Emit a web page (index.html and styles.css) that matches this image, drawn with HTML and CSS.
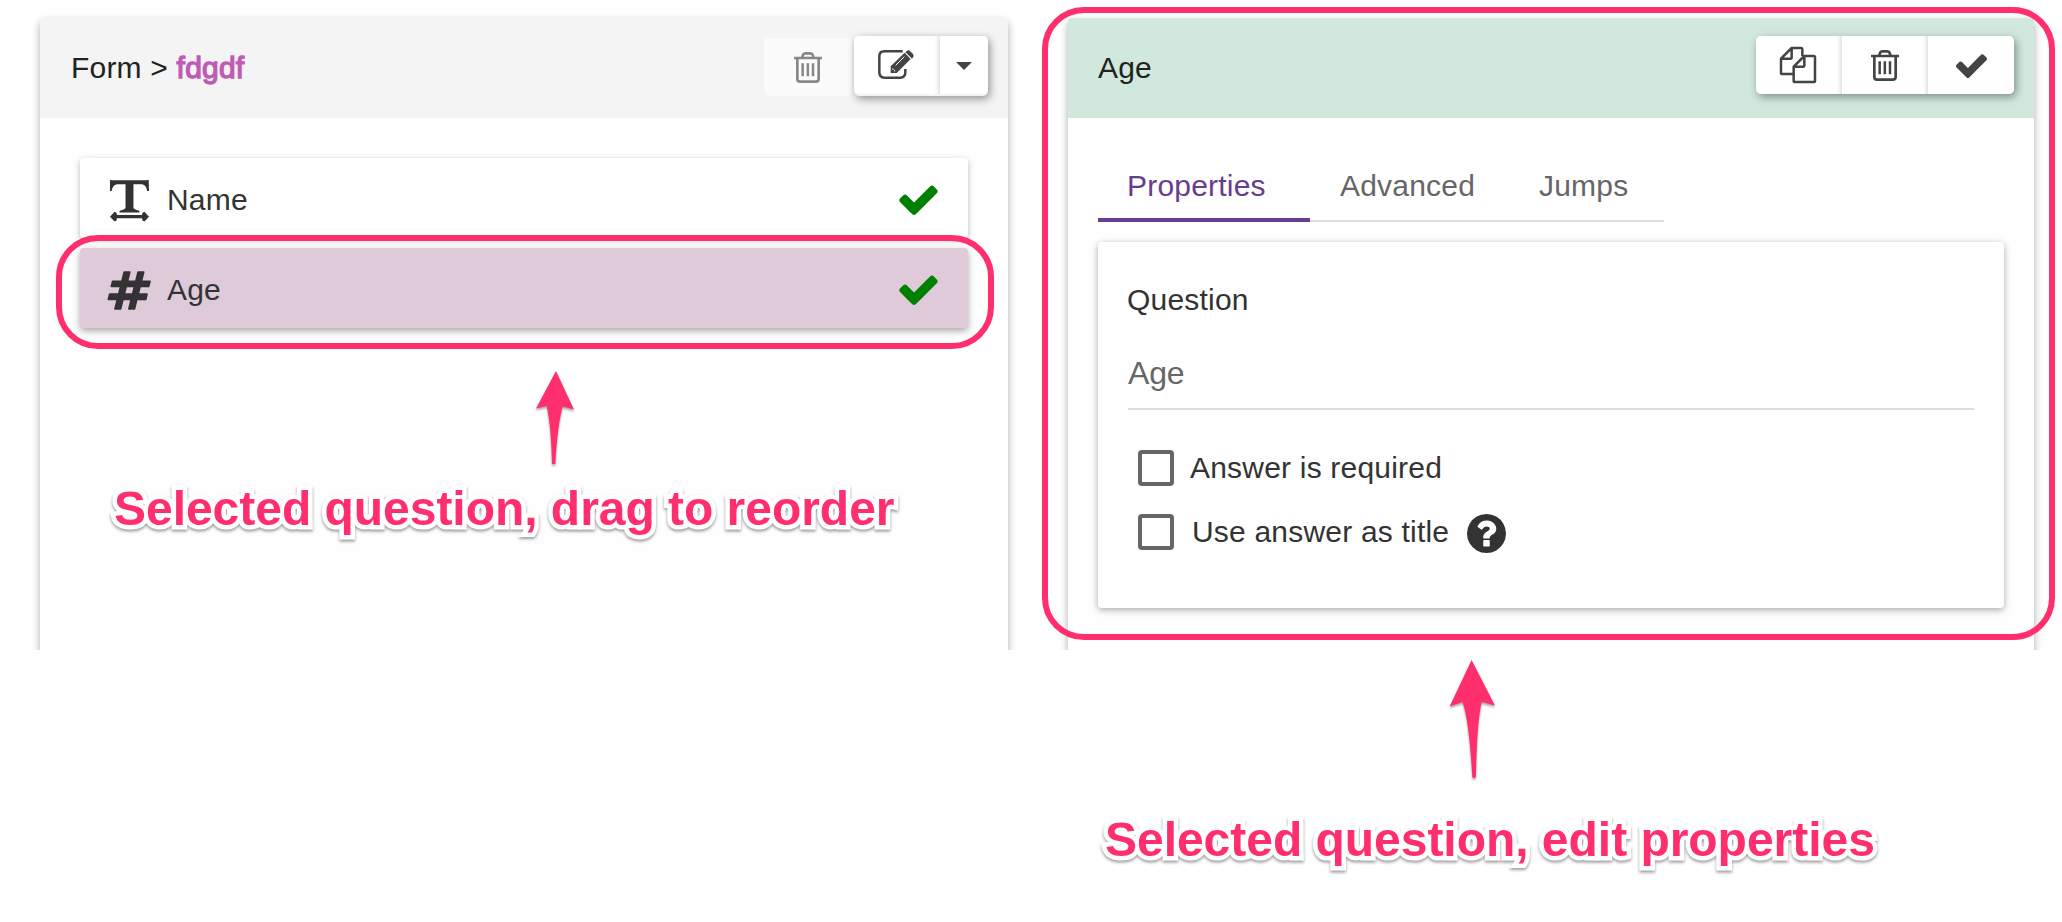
FILE: index.html
```html
<!DOCTYPE html>
<html lang="en">
<head>
<meta charset="utf-8">
<title>Form editor</title>
<link rel="stylesheet" href="styles.css">
</head>
<body>
<svg class="sprite" aria-hidden="true">
  <symbol id="check" viewBox="121 270 1550 1252"><path d="M1671 566q0 40-28 68l-724 724-136 136q-28 28-68 28t-68-28l-136-136-362-362q-28-28-28-68t28-68l136-136q28-28 68-28t68 28l294 295 656-657q28-28 68-28t68 28l136 136q28 28 28 68z"/></symbol>
  <symbol id="trash" viewBox="0 0 84 93"><path d="M10 19V80Q10 89 18 89H65Q74 89 74 80V19M0 18H84M24 17L28 7Q30 4 34 4H49Q53 4 55 7L59 17" fill="none" stroke="currentColor" stroke-width="8"/><path d="M26 34V73M41.500 34V73M57 34V73" fill="none" stroke="currentColor" stroke-width="7.500"/></symbol>
</svg>
<main class="workspace">
  <section class="panel">
    <header class="panel-head">
      <h1 class="title">Form &gt; <span class="form-name">fdgdf</span></h1>
      <div class="tools">
        <button class="btn disabled"><svg class="i-trash"><use href="#trash"/></svg></button>
        <div class="group">
          <button class="btn"><svg class="i-edit" viewBox="0 0 108 87"><path d="M74 4H19Q4 4 4 19V67Q4 83 19 83H67Q82 83 82 67V57" class="line"/><path d="M38 49L80 8L98 27L56 69H38Z"/><path d="M84 5Q90-2 96 3L105 12Q110 18 104 24L101 26L82 8Z"/><path d="M53 46L79 20M82 8L100 26" stroke="#fff" stroke-width="3"/><path d="M43 54L53 64H48V59H43Z" fill="#fff"/></svg></button>
          <button class="btn narrow"><svg class="i-caret" viewBox="0 0 16 8"><path d="M0 0H16L8 8Z"/></svg></button>
        </div>
      </div>
    </header>
    <ul class="questions">
      <li class="question">
        <svg class="q-icon" viewBox="84 59 130 130"><path d="M90 61L96 63H201L207 61L208 95H202Q200 77 187 75H161V146Q161 151 179 155V160H119V155Q137 151 137 146V75H111Q98 77 95 95H90Z"/><path d="M90 173L103 159Q111 158 111 168H187Q187 158 195 159L208 173L195 187Q187 188 187 178H111Q111 188 103 187Z"/></svg>
        <span class="q-name">Name</span><svg class="q-ok"><use href="#check"/></svg>
      </li>
      <li class="question selected">
        <svg class="q-icon" viewBox="84 325 130 130"><path d="M133 334H150L122 446H105ZM175 334H192L164 446H147ZM98 362H211L207 378H94ZM89 401H202L198 417H85Z" stroke="currentColor" stroke-width="5" stroke-linejoin="round"/></svg>
        <span class="q-name">Age</span><svg class="q-ok"><use href="#check"/></svg>
      </li>
    </ul>
  </section>
  <section class="panel detail">
    <header class="panel-head green">
      <h2 class="title">Age</h2>
      <div class="group">
        <button class="btn"><svg class="i-copy" viewBox="0 0 108 108"><path class="line" d="M39 81H7Q3 81 3 77V35L35 3H63Q67 3 67 7V27M35 3V31Q35 35 31 35H3"/><path class="line" d="M45 105Q41 105 41 101V59L73 27H101Q105 27 105 31V101Q105 105 101 105ZM73 27V55Q73 59 69 59H41"/></svg></button>
        <button class="btn"><svg class="i-trash"><use href="#trash"/></svg></button>
        <button class="btn"><svg class="i-check"><use href="#check"/></svg></button>
      </div>
    </header>
    <div class="detail-body">
      <nav class="tabs">
        <a class="tab active">Properties</a><a class="tab advanced">Advanced</a><a class="tab jumps">Jumps</a>
      </nav>
      <div class="card">
        <div class="label">Question</div>
        <div class="field">Age</div>
        <div class="option"><span class="box"></span><span class="required">Answer is required</span></div>
        <div class="option"><span class="box"></span><span class="use-title">Use answer as title</span>
          <svg class="help" viewBox="128 128 1536 1536"><path d="M1024 1376v-192q0-14-9-23t-23-9h-192q-14 0-23 9t-9 23v192q0 14 9 23t23 9h192q14 0 23-9t9-23zm256-672q0-88-55.500-163t-138.500-116-170-41q-243 0-371 213-15 24 8 42l132 100q7 6 19 6 16 0 25-12 53-68 86-92 34-24 86-24 48 0 85.500 26t37.500 59q0 38-20 61t-68 45q-63 28-115.500 86.500t-52.500 125.500v36q0 14 9 23t23 9h192q14 0 23-9t9-23q0-19 21.500-49.500t54.500-49.500q32-18 49-28.500t46-35 44.500-48 28-60.500 12.500-81zm384 192q0 209-103 385.500t-279.500 279.500-385.500 103-385.500-103-279.500-279.500-103-385.500 103-385.500 279.500-279.500 385.500-103 385.500 103 279.500 279.500 103 385.500z"/></svg>
        </div>
      </div>
    </div>
  </section>
</main>
<div class="ring ring-question"></div>
<div class="ring ring-detail"></div>
<svg class="arrow arrow-left" viewBox="536 371 38 93"><path d="M556 371L574 409.500L562.700 406.500Q557.500 425 555.300 464H552Q551 425 546.700 406L536 408.500Z"/></svg>
<svg class="arrow arrow-right" viewBox="1449 660 46 118"><path d="M1471.600 660L1495 705.500L1481.800 702Q1477 720 1475.900 777Q1474 779 1472.300 777Q1469 720 1462.500 702L1449.600 706.500Z"/></svg>
<p class="caption caption-left">Selected question, drag to reorder</p>
<p class="caption caption-right">Selected question, edit properties</p>
</body>
</html>
```
FILE: styles.css
```css
* { box-sizing: border-box; }
body {
  margin: 0;
  position: relative;
  width: 2062px;
  height: 922px;
  overflow: hidden;
  background: #fff;
  color: #333;
  font: 30px/36px "Liberation Sans", Arial, sans-serif;
  letter-spacing: 0.2px;
}
.sprite { position: absolute; width: 0; height: 0; }
svg { display: block; fill: currentColor; overflow: visible; flex: none; }
.line { fill: none; stroke: currentColor; stroke-width: 7.5; stroke-linejoin: round; }
.workspace {
  display: flex;
  gap: 60px;
  height: 650px;
  padding: 18px 28px 0 40px;
  overflow: hidden;
}
.panel {
  width: 968px;
  height: 700px;
  border-radius: 4px;
  background: #fefefe;
  box-shadow: 0 4px 8px rgba(0, 0, 0, 0.33);
}
.detail { width: 966px; }
.panel-head {
  display: flex;
  align-items: flex-start;
  justify-content: space-between;
  height: 100px;
  padding: 18px 20px 0 31px;
  border-radius: 4px 4px 0 0;
  background: #f4f4f4;
}
.green { padding-left: 30px; background: #d1e9dc; }
.title { margin: 14px 0 0; font-size: 30px; font-weight: 400; color: #222; letter-spacing: 0.2px; }
.form-name { color: #c05ab4; -webkit-text-stroke: 1.300px #c05ab4; }
.tools { display: flex; gap: 2px; }
.group { display: flex; border-radius: 5px; box-shadow: 2px 3px 8px rgba(0, 0, 0, 0.4); }
.btn {
  display: flex;
  align-items: center;
  justify-content: center;
  width: 86px;
  height: 58px;
  padding: 0;
  border: 0;
  background: #fff;
  color: #444;
}
.group .btn:first-child { border-radius: 5px 0 0 5px; }
.group .btn:last-child { border-radius: 0 5px 5px 0; }
.group .btn:not(:last-child) { box-shadow: inset -5px 0 5px -4px rgba(0, 0, 0, 0.18); }
.group .narrow { width: 48px; }
.disabled { width: 88px; margin-top: 2px; border-radius: 5px; background: #fbfbfb; color: #888; }
.i-trash { width: 28px; height: 31px; margin-right: 1px; }
.i-edit { width: 36px; height: 29px; margin: 0 2px 2px 0; }
.i-caret { width: 16px; height: 8px; margin-top: 1px; }
.i-copy { width: 36px; height: 36px; margin-right: 2px; }
.i-check { width: 31px; height: 25px; margin-top: 1px; }
.questions {
  display: flex;
  flex-direction: column;
  gap: 10px;
  margin: 0;
  padding: 40px 40px 0;
  list-style: none;
}
.question {
  display: flex;
  align-items: center;
  height: 80px;
  padding: 4px 30px 0 28px;
  border-radius: 4px;
  background: #fff;
  box-shadow: 0 2px 6px rgba(0, 0, 0, 0.28);
}
.question.selected { background: #dfcada; box-shadow: 0 3px 7px rgba(0, 0, 0, 0.34); }
.q-icon { width: 43px; height: 43px; margin-right: 16px; }
.q-name { flex: 1; }
.q-ok { width: 39px; height: 31px; margin-bottom: 1px; color: #008000; }
.detail-body { padding: 46px 30px 0; }
.tabs { display: flex; width: 566px; height: 58px; border-bottom: 2px solid #ddd; }
.tab { height: 58px; padding: 4px 0 0 30px; color: #666; }
.tab.active { width: 212px; padding-left: 29px; border-bottom: 4px solid #663d8f; color: #663d8f; }
.tab.advanced { width: 199px; }
.tab.jumps { width: 155px; }
.card {
  height: 366px;
  margin-top: 20px;
  padding: 40px 30px 0;
  border-radius: 4px;
  box-shadow: 0 2px 7px rgba(0, 0, 0, 0.34);
}
.label { height: 36px; margin-left: -1px; }
.field {
  height: 92px;
  padding-top: 36px;
  border-bottom: 2px solid #ddd;
  color: #666;
  font-size: 32px;
  line-height: 38px;
  letter-spacing: -0.2px;
}
.option { display: flex; align-items: center; height: 36px; margin: 28px 0 0 10px; }
.option:nth-of-type(3) { margin-top: 40px; }
.box { width: 36px; height: 36px; margin-right: 17px; border: 4px solid #666; border-radius: 4px; }
.required { margin-left: -1px; }
.use-title { margin-left: 1px; }
.help { width: 39px; height: 39px; margin: 3px 0 0 18px; }

/* Callouts drawn over the interface */
.ring { position: absolute; border: 6px solid #ff2f6e; border-radius: 42px; }
.ring-question { left: 56px; top: 235px; width: 938px; height: 114px; }
.ring-detail { left: 1042px; top: 7px; width: 1013px; height: 633px; }
.arrow { position: absolute; color: #ff2f6e; filter: drop-shadow(0 2px 1px rgba(0, 0, 0, 0.35)); }
.arrow-left { left: 536px; top: 371px; width: 38px; height: 93px; }
.arrow-right { left: 1449px; top: 660px; width: 46px; height: 118px; }
.caption {
  position: absolute;
  margin: 0;
  color: #ff2f6e;
  font-size: 48px;
  font-weight: 700;
  line-height: 56px;
  letter-spacing: -0.03px;
  white-space: nowrap;
  -webkit-text-stroke: 9px #fff;
  paint-order: stroke fill;
  stroke-linejoin: round;
  filter: drop-shadow(0 2px 1.500px rgba(0, 0, 0, 0.38));
}
.caption-left { left: 114px; top: 481px; }
.caption-right { left: 1105px; top: 812px; }
```
